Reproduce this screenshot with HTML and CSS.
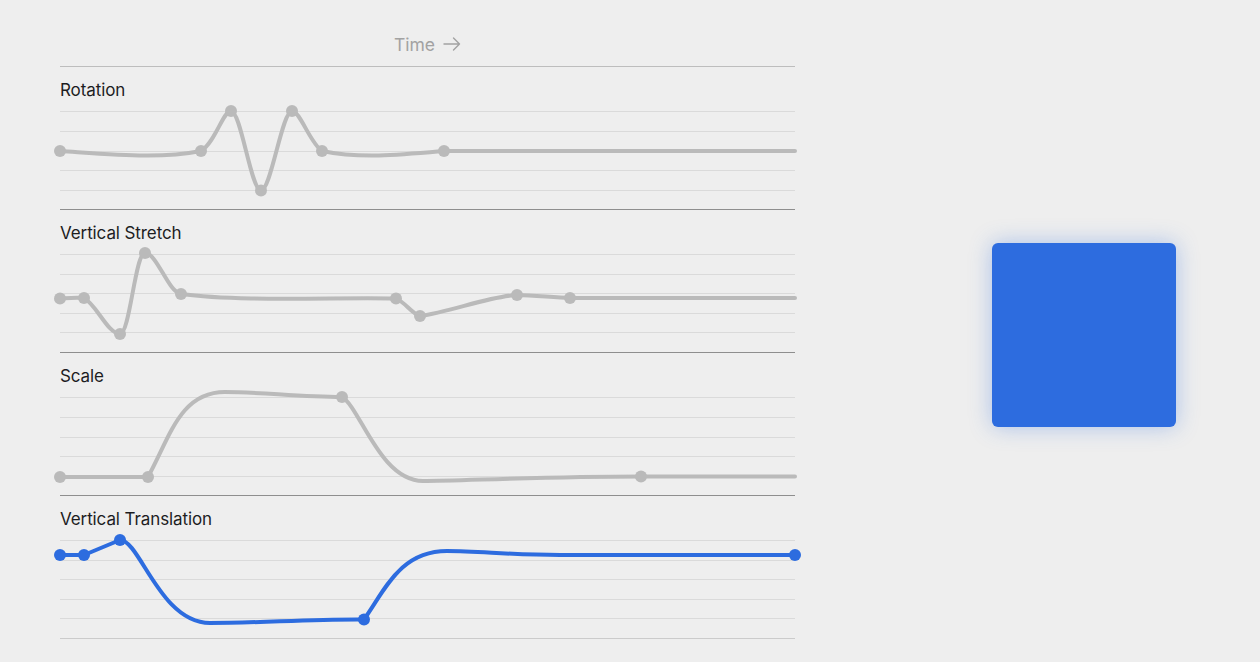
FILE: index.html
```html
<!DOCTYPE html>
<html lang="en">
<head>
<meta charset="utf-8">
<title>Animation curves</title>
<link rel="stylesheet" href="styles.css">
</head>
<body>
<main class="page">
  <section class="timeline">
    <header class="timeline-header"><span class="time-label">Time</span><svg class="arrow" width="18" height="14" viewBox="0 0 18 14" aria-hidden="true"><path d="M1,7 H16.5 M10.5,1 L16.5,7 L10.5,13"/></svg></header>

    <div class="track">
      <div class="track-label">Rotation</div>
      <svg class="track-plot" width="735" height="98" viewBox="0 0 735 98">
        <g class="grid"><line x1="0" x2="735" y1="0.5" y2="0.5"/><line x1="0" x2="735" y1="20.5" y2="20.5"/><line x1="0" x2="735" y1="40.5" y2="40.5"/><line x1="0" x2="735" y1="59.5" y2="59.5"/><line x1="0" x2="735" y1="79.5" y2="79.5"/></g>
        <path class="curve" d="M0,40 C60,44 100,48 141,40 C155,32 163,0 171,0 C181,0 191,79.5 201,79.5 C211,79.5 222,0 232,0 C240,0 250,32 262,40 C300,48 340,44 384,40 L735,40"/>
        <g class="dots"><circle cx="0" cy="40" r="6"/><circle cx="141" cy="40" r="6"/><circle cx="171" cy="0" r="6"/><circle cx="201" cy="79.5" r="6"/><circle cx="232" cy="0" r="6"/><circle cx="262" cy="40" r="6"/><circle cx="384" cy="40" r="6"/></g>
      </svg>
    </div>

    <div class="track">
      <div class="track-label">Vertical Stretch</div>
      <svg class="track-plot" width="735" height="98" viewBox="0 0 735 98">
        <g class="grid"><line x1="0" x2="735" y1="0.5" y2="0.5"/><line x1="0" x2="735" y1="20.5" y2="20.5"/><line x1="0" x2="735" y1="39.5" y2="39.5"/><line x1="0" x2="735" y1="59.5" y2="59.5"/><line x1="0" x2="735" y1="78.5" y2="78.5"/></g>
        <path class="curve" d="M0,44.5 C8,44 16,43 24,44 C36,50 48,80 60,80 C70,80 75,-1 85,-1 C97,-1 108,38 121,40 C180,48 280,43 336,44.5 C345,48 352,60 360,62 C390,58 430,42 457,41 C475,41 495,44 510,44 L735,44"/>
        <g class="dots"><circle cx="0" cy="44.5" r="6"/><circle cx="24" cy="44" r="6"/><circle cx="60" cy="80" r="6"/><circle cx="85" cy="-1" r="6"/><circle cx="121" cy="40" r="6"/><circle cx="336" cy="44.5" r="6"/><circle cx="360" cy="62" r="6"/><circle cx="457" cy="41" r="6"/><circle cx="510" cy="44" r="6"/></g>
      </svg>
    </div>

    <div class="track">
      <div class="track-label">Scale</div>
      <svg class="track-plot" width="735" height="98" viewBox="0 0 735 98">
        <g class="grid"><line x1="0" x2="735" y1="0.5" y2="0.5"/><line x1="0" x2="735" y1="20.5" y2="20.5"/><line x1="0" x2="735" y1="40.5" y2="40.5"/><line x1="0" x2="735" y1="59.5" y2="59.5"/><line x1="0" x2="735" y1="79.5" y2="79.5"/></g>
        <path class="curve" d="M0,80 L88,80 C110,40 120,-5 165,-5 C200,-5 240,0 282,0 C300,10 320,84 363,84 C400,84 480,79.5 581,79.5 L735,79.5"/>
        <g class="dots"><circle cx="0" cy="80" r="6"/><circle cx="88" cy="80" r="6"/><circle cx="282" cy="0" r="6"/><circle cx="581" cy="79.5" r="6"/></g>
      </svg>
    </div>

    <div class="track track-last">
      <div class="track-label">Vertical Translation</div>
      <svg class="track-plot" width="735" height="98" viewBox="0 0 735 98">
        <g class="grid"><line x1="0" x2="735" y1="0.5" y2="0.5"/><line x1="0" x2="735" y1="20.5" y2="20.5"/><line x1="0" x2="735" y1="39.5" y2="39.5"/><line x1="0" x2="735" y1="59.5" y2="59.5"/><line x1="0" x2="735" y1="78.5" y2="78.5"/></g>
        <path class="curve curve-active" d="M0,15 L24,15 L60,0 C80,0 100,83 150,83 C200,83 250,79 304,79.5 C325,50 340,11 387,11 C420,11 450,15 500,15 L735,15"/>
        <g class="dots dots-active"><circle cx="0" cy="15" r="6"/><circle cx="24" cy="15" r="6"/><circle cx="60" cy="0" r="6"/><circle cx="304" cy="79.5" r="6"/><circle cx="735" cy="15" r="6"/></g>
      </svg>
    </div>
  </section>

  <section class="preview">
    <div class="box"></div>
  </section>
</main>
</body>
</html>
```

FILE: styles.css
```css
html, body {
  margin: 0;
  padding: 0;
  background: #eeeeee;
}

body {
  font-family: Inter, "Noto Sans", "Liberation Sans", sans-serif;
  color: #1d1d1f;
}

.page {
  display: flex;
  height: 662px;
  overflow: hidden;
}

.timeline {
  flex: none;
  width: 735px;
  margin-left: 60px;
}

.timeline-header {
  box-sizing: border-box;
  border-bottom: 1px solid #bdbdbd;
  height: 67px;
  padding-top: 35px;
  display: flex;
  justify-content: center;
  align-items: flex-start;
  gap: 8px;
}

.time-label {
  font-size: 17.5px;
  line-height: 20px;
  color: #a2a2a2;
  letter-spacing: 0;
}

.arrow {
  display: block;
  margin-top: 2px;
  fill: none;
  stroke: #a2a2a2;
  stroke-width: 1.4;
  stroke-linecap: round;
  stroke-linejoin: round;
}

.track {
  height: 142px;
  border-bottom: 1px solid #8e8e8e;
}

.track-last {
  border-bottom-color: #cbcbcb;
}

.track-label {
  height: 44px;
  box-sizing: border-box;
  padding-top: 13px;
  font-size: 17px;
  line-height: 20px;
  letter-spacing: -0.1px;
  color: #1d1d1f;
}

.track-plot {
  display: block;
  overflow: visible;
}

.grid line {
  stroke: #dadada;
  stroke-width: 1;
}

.curve {
  fill: none;
  stroke: #bababa;
  stroke-width: 4;
  stroke-linecap: round;
  stroke-linejoin: round;
}

.dots circle {
  fill: #bababa;
}

.curve-active {
  stroke: #2d6cdf;
}

.dots-active circle {
  fill: #2d6cdf;
}

.preview {
  flex: 1;
  display: flex;
  align-items: center;
  justify-content: flex-end;
  padding-right: 84px;
  padding-top: 8px;
}

.box {
  width: 184px;
  height: 184px;
  border-radius: 6px;
  background: #2d6cdf;
  box-shadow: 0 0 22px rgba(45, 108, 223, 0.35);
}
```
